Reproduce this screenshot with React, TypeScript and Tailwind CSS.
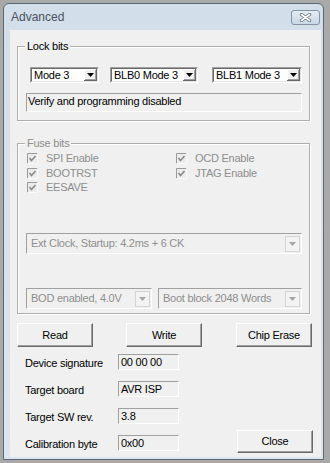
import React from 'react';

const sunken = 'border-t border-l border-t-[#a0a0a0] border-l-[#a0a0a0] border-b border-r border-b-white border-r-white';

function Arrow({ color }: { color: string }) {
  return (
    <svg width="7" height="4" viewBox="0 0 7 4">
      <polygon points="0,0 7,0 3.5,4" fill={color} />
    </svg>
  );
}

function Combo({ text, className }: { text: string; className: string }) {
  return (
    <div className={`h-[16px] bg-white ${sunken} ${className}`}>
      <div className="h-full flex items-stretch border-t border-l border-t-[#696969] border-l-[#696969] border-b border-r border-b-[#e3e3e3] border-r-[#e3e3e3]">
        <span className="flex-1 pl-[2px] leading-[12px] whitespace-nowrap overflow-hidden">{text}</span>
        <div className="w-[13px] flex items-center justify-center bg-[#f0f0f0] border-b border-r border-b-[#696969] border-r-[#696969] shadow-[inset_1px_1px_0_#fff,inset_-1px_-1px_0_#a0a0a0]">
          <Arrow color="#000" />
        </div>
      </div>
    </div>
  );
}

function DisabledCombo({ text, className }: { text: string; className: string }) {
  return (
    <div className={`h-[21px] flex items-center bg-[#f0f0f0] ${sunken} ${className}`}>
      <span className="flex-1 pl-[4px] text-[#8e8e8e] whitespace-nowrap overflow-hidden">{text}</span>
      <div className="w-[15px] h-[16px] mr-[1px] flex items-center justify-center border border-[#d4d4d4] bg-[#f3f3f3]">
        <Arrow color="#a6a6a6" />
      </div>
    </div>
  );
}

function Check({ label }: { label: string }) {
  return (
    <div className="flex items-center gap-[8px] text-[#8e8e8e]">
      <svg width="11" height="11" viewBox="0 0 11 11">
        <rect x="0" y="0" width="11" height="11" fill="#ececec" />
        <path d="M0.5 10.5 V0.5 H10.5" stroke="#9a9a9a" fill="none" />
        <path d="M0.5 10.5 H10.5 V0.5" stroke="#fafafa" fill="none" />
        <path d="M2.5 5 L4.5 7.5 L8.5 3" stroke="#8a8a8a" strokeWidth="1.6" fill="none" />
      </svg>
      <span>{label}</span>
    </div>
  );
}

function Group({ label, disabled, className, children }: { label: string; disabled?: boolean; className: string; children: React.ReactNode }) {
  return (
    <div className={`relative border border-[#adadad] shadow-[inset_1px_1px_0_#fff,1px_1px_0_#fff] ${className}`}>
      <span className={`absolute left-[7px] top-[-7px] px-[2px] bg-[#f0f0f0] leading-[13px] ${disabled ? 'text-[#8e8e8e]' : 'text-black'}`}>
        {label}
      </span>
      {children}
    </div>
  );
}

function Button({ label, className }: { label: string; className: string }) {
  return (
    <div className={`w-[76px] flex items-center justify-center bg-[#f0f0f0] border border-t-white border-l-white border-b-[#696969] border-r-[#696969] shadow-[inset_-1px_-1px_0_#a0a0a0] ${className}`}>
      {label}
    </div>
  );
}

function Field({ label, value, className }: { label: string; value: string; className: string }) {
  return (
    <div className={`flex items-center ${className}`}>
      <span className="w-[93px] pt-[2px]">{label}</span>
      <div className={`w-[61px] h-[16px] pl-[2px] pt-[1px] leading-[13px] ${sunken}`}>{value}</div>
    </div>
  );
}

export default function App() {
  return (
    <div className="w-[330px] h-[463px] bg-[#a9a9a9] pt-[3px] pl-[3px] overflow-hidden font-['Liberation_Sans',Arial,sans-serif] text-[11px] tracking-[-0.25px] text-black">
      <div className="w-[321px] h-[457px] rounded-t-[6px] border border-[#5f6770] bg-gradient-to-b from-[#d2deea] to-[#dbe5ef] flex flex-col">
        {/* title bar */}
        <div className="h-[26px] flex items-center justify-between pl-[7px] pr-[3px]">
          <span className="text-[12px] tracking-normal text-[#4a525b]">Advanced</span>
          <div className="w-[29px] h-[15px] rounded-[3px] border border-[#8593a3] bg-gradient-to-b from-[#e4ecf4] to-[#c9d7e6] flex items-center justify-center">
            <svg width="13" height="9" viewBox="0 0 13 9">
              <path d="M2.5 1.5 L10.5 7.5 M10.5 1.5 L2.5 7.5" stroke="#6c7886" strokeWidth="3.4" strokeLinecap="round" />
              <path d="M2.5 1.5 L10.5 7.5 M10.5 1.5 L2.5 7.5" stroke="#fff" strokeWidth="1.6" strokeLinecap="round" />
            </svg>
          </div>
        </div>

        {/* client area */}
        <div className="ml-[6px] w-[311px] h-[427px] bg-[#f0f0f0] flex flex-col">
          <Group label="Lock bits" className="mt-[16px] ml-[7px] w-[293px] h-[75px] flex flex-col">
            <div className="mt-[20px] ml-[12px] flex">
              <Combo text="Mode 3" className="w-[69px]" />
              <Combo text="BLB0 Mode 3" className="w-[88px] ml-[11px]" />
              <Combo text="BLB1 Mode 3" className="w-[90px] ml-[14px]" />
            </div>
            <div className={`mt-[10px] ml-[8px] w-[276px] h-[19px] pl-[1px] pt-[1px] leading-[13px] ${sunken}`}>
              Verify and programming disabled
            </div>
          </Group>

          <Group label="Fuse bits" disabled className="mt-[22px] ml-[7px] w-[293px] h-[171px] flex flex-col">
            <div className="mt-[7px] ml-[9px] grid grid-cols-[149px_1fr] grid-rows-[15px_14px_14px] items-center">
              <Check label="SPI Enable" />
              <Check label="OCD Enable" />
              <Check label="BOOTRST" />
              <Check label="JTAG Enable" />
              <Check label="EESAVE" />
            </div>
            <DisabledCombo text="Ext Clock, Startup: 4.2ms + 6 CK" className="mt-[39px] ml-[8px] w-[276px]" />
            <div className="mt-[34px] ml-[8px] flex">
              <DisabledCombo text="BOD enabled, 4.0V" className="w-[126px]" />
              <DisabledCombo text="Boot block 2048 Words" className="w-[144px] ml-[6px]" />
            </div>
          </Group>

          <div className="mt-[9px] ml-[7px] flex h-[24px]">
            <Button label="Read" className="" />
            <Button label="Write" className="ml-[33px]" />
            <Button label="Chip Erase" className="ml-[34px]" />
          </div>

          <div className="mt-[6px] flex items-end">
            <div className="ml-[15px] flex flex-col">
              <Field label="Device signature" value="00 00 00" className="" />
              <Field label="Target board" value="AVR ISP" className="mt-[8px]" />
              <Field label="Target SW rev." value="3.8" className="mt-[9px]" />
              <Field label="Calibration byte" value="0x00" className="mt-[8px]" />
            </div>
            <Button label="Close" className="ml-[58px] h-[23px] mb-[-1px]" />
          </div>
        </div>
      </div>
    </div>
  );
}
